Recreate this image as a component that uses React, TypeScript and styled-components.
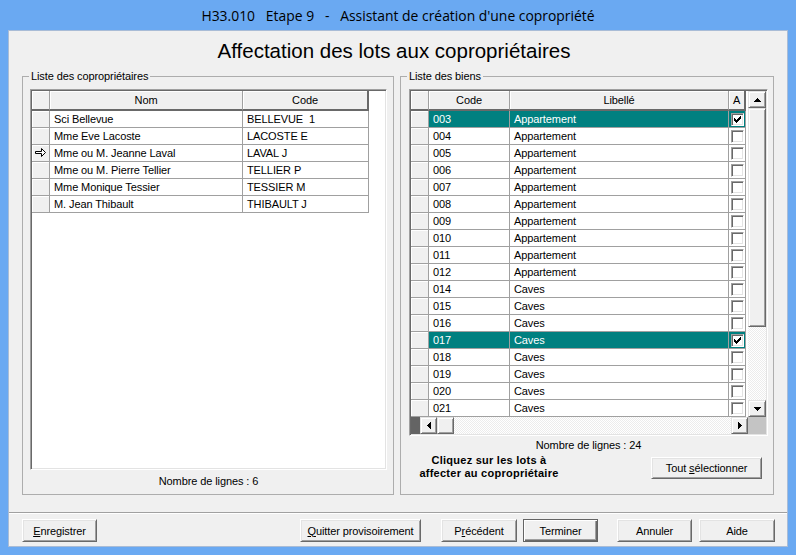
import React from "react";
import styled, { createGlobalStyle } from "styled-components";

const UI_FONT = `"Liberation Sans", Arial, sans-serif`;

const GlobalStyle = createGlobalStyle`
  html, body { margin: 0; padding: 0; background: #6aa9f2; }
  body { width: 796px; height: 555px; overflow: hidden; }
  *, *::before, *::after { box-sizing: border-box; }
`;

const Window = styled.div`
  width: 796px;
  height: 555px;
  padding: 0 8px 8px;
  background: #6aa9f2;
  display: flex;
  flex-direction: column;
  font-family: ${UI_FONT};
  font-size: 11px;
  letter-spacing: -0.1px;
  color: #000;
`;

const TitleBar = styled.div`
  height: 30px;
  flex: none;
  display: flex;
  align-items: center;
  justify-content: center;
  font-family: "Open Sans", "Noto Sans", sans-serif;
  font-size: 13.9px;
  letter-spacing: 0;
  white-space: pre;
  color: #000;
  padding-top: 1px;
`;

const Client = styled.div`
  flex: 1;
  background: #f0f0f0;
  border: 1px solid #a9bcd6;
  display: flex;
  flex-direction: column;
`;

const Heading = styled.h1`
  margin: 0;
  height: 39px;
  flex: none;
  font-family: ${UI_FONT};
  font-weight: normal;
  font-size: 20.5px;
  line-height: 39px;
  letter-spacing: 0;
  text-align: center;
  padding-right: 8px;
`;

const Panels = styled.div`
  display: flex;
  gap: 6px;
  padding: 0 13px;
  flex: none;
`;

const GroupBox = styled.fieldset<{ $w: number; $pl: number; $pr: number }>`
  margin: 0;
  min-width: 0;
  width: ${(p) => p.$w}px;
  padding: 6px ${(p) => p.$pr}px 0 ${(p) => p.$pl}px;
  border: 1px solid #adadad;
`;

const Legend = styled.legend<{ $ml: number }>`
  padding: 0 2px;
  margin-left: ${(p) => p.$ml}px;
  line-height: 13px;
  font-size: 11px;
`;

const GroupBody = styled.div`
  height: 405px;
  display: flex;
  flex-direction: column;
`;

const GridFrame = styled.div<{ $h: number }>`
  flex: none;
  height: ${(p) => p.$h}px;
  background: #fff;
  border: 1px solid;
  border-color: #a0a0a0 #ffffff #ffffff #a0a0a0;
  padding: 1px;
  box-shadow: inset 1px 1px 0 #696969, inset -1px -1px 0 #e3e3e3;
  display: flex;
  flex-direction: column;
  overflow: hidden;
`;

const GridTop = styled.div`
  flex: 1;
  display: flex;
  min-height: 0;
`;

const TableArea = styled.div`
  flex: 1;
  display: flex;
  flex-direction: column;
`;

const Row = styled.div`
  display: flex;
  flex: none;
`;

const HeaderCell = styled.div<{ $w: number; $last?: boolean }>`
  flex: none;
  width: ${(p) => p.$w}px;
  height: 20px;
  background: #f0f0f0;
  border-right: ${(p) => (p.$last ? "2px solid #696969" : "1px solid #a0a0a0")};
  border-bottom: 2px solid #696969;
  box-shadow: inset 1px 1px 0 #ffffff;
  text-align: center;
  line-height: 18px;
`;

const Indicator = styled.div<{ $w: number }>`
  flex: none;
  width: ${(p) => p.$w}px;
  height: 17px;
  background: #f0f0f0;
  border-right: 1px solid #a0a0a0;
  border-bottom: 1px solid #a0a0a0;
  box-shadow: inset 1px 1px 0 #ffffff;
  display: flex;
  align-items: center;
  justify-content: center;
`;

const Cell = styled.div<{ $w: number; $sel?: boolean }>`
  flex: none;
  width: ${(p) => p.$w}px;
  height: 17px;
  padding-left: 4px;
  border-right: 1px solid #a0a0a0;
  border-bottom: 1px solid #a0a0a0;
  background: ${(p) => (p.$sel ? "#008080" : "#ffffff")};
  color: ${(p) => (p.$sel ? "#ffffff" : "#000000")};
  line-height: 16px;
  white-space: pre;
  overflow: hidden;
`;

const CheckCell = styled(Cell)`
  padding: 0;
  display: flex;
  align-items: center;
  justify-content: center;
`;

const CheckBox = styled.div`
  width: 13px;
  height: 13px;
  background: #fff;
  border: 1px solid;
  border-color: #a0a0a0 #ffffff #ffffff #a0a0a0;
  box-shadow: inset 1px 1px 0 #696969, inset -1px -1px 0 #e3e3e3;
  display: flex;
  align-items: center;
  justify-content: center;
`;

const Raised = styled.div<{ $w?: number; $h?: number }>`
  flex: none;
  width: ${(p) => (p.$w ? `${p.$w}px` : "auto")};
  height: ${(p) => (p.$h ? `${p.$h}px` : "auto")};
  background: #f0f0f0;
  border: 1px solid;
  border-color: #e3e3e3 #696969 #696969 #e3e3e3;
  box-shadow: inset 1px 1px 0 #ffffff, inset -1px -1px 0 #a0a0a0;
  display: flex;
  align-items: center;
  justify-content: center;
`;

const Track = styled.div`
  flex: 1;
  background-color: #fff;
  background-image: repeating-conic-gradient(#ececec 0% 25%, #ffffff 0% 50%);
  background-size: 2px 2px;
`;

const VScroll = styled.div`
  flex: none;
  width: 18px;
  display: flex;
  flex-direction: column;
`;

const HScroll = styled.div`
  flex: none;
  height: 17px;
  display: flex;
`;

const SplitBox = styled.div`
  flex: none;
  width: 9px;
  background: #646464;
`;

const Corner = styled.div`
  flex: none;
  width: 18px;
  background: #c4c4c4;
`;

const CountLabel = styled.div<{ $h: number; $pb?: number }>`
  flex: none;
  height: ${(p) => p.$h}px;
  padding-bottom: ${(p) => p.$pb ?? 0}px;
  display: flex;
  align-items: center;
  justify-content: center;
`;

const BottomRow = styled.div`
  flex: 1;
  display: flex;
  align-items: flex-start;
`;

const Hint = styled.div`
  width: 160px;
  text-align: center;
  font-weight: bold;
  line-height: 13px;
  letter-spacing: 0.25px;
  padding-top: 1px;
`;

const Button = styled.button<{ $w: number; $h?: number; $default?: boolean }>`
  flex: none;
  width: ${(p) => p.$w}px;
  height: ${(p) => p.$h ?? 23}px;
  padding: 0;
  margin: 0;
  font-family: ${UI_FONT};
  font-size: 11px;
  letter-spacing: -0.1px;
  color: #000;
  background: #f0f0f0;
  border: 1px solid;
  border-color: ${(p) =>
    p.$default ? "#646464" : "#ffffff #696969 #696969 #ffffff"};
  box-shadow: ${(p) =>
    p.$default
      ? "inset 1px 1px 0 #ffffff, inset -1px -1px 0 #696969, inset -2px -2px 0 #a0a0a0"
      : "inset 1px 1px 0 #e3e3e3, inset -1px -1px 0 #a0a0a0"};
  text-align: center;
  cursor: default;
`;

const Separator = styled.div`
  flex: none;
  height: 2px;
  margin-top: 17px;
  border-top: 1px solid #a0a0a0;
  border-bottom: 1px solid #ffffff;
`;

const ButtonBar = styled.div`
  flex: none;
  display: flex;
  margin-top: 5px;
  padding: 0 12px 0 13px;
`;

const Spacer = styled.div<{ $w?: number }>`
  flex: ${(p) => (p.$w ? "none" : "1")};
  width: ${(p) => (p.$w ? `${p.$w}px` : "auto")};
`;

const TriUp = () => (
  <svg width="7" height="4" viewBox="0 0 7 4" shapeRendering="crispEdges">
    <path d="M3 0h1v1h-1zM2 1h3v1h-3zM1 2h5v1h-5zM0 3h7v1h-7z" fill="#000" />
  </svg>
);
const TriDown = () => (
  <svg width="7" height="4" viewBox="0 0 7 4" shapeRendering="crispEdges">
    <path d="M0 0h7v1h-7zM1 1h5v1h-5zM2 2h3v1h-3zM3 3h1v1h-1z" fill="#000" />
  </svg>
);
const TriLeft = () => (
  <svg width="4" height="7" viewBox="0 0 4 7" shapeRendering="crispEdges">
    <path d="M3 0h1v7h-1zM2 1h1v5h-1zM1 2h1v3h-1zM0 3h1v1h-1z" fill="#000" />
  </svg>
);
const TriRight = () => (
  <svg width="4" height="7" viewBox="0 0 4 7" shapeRendering="crispEdges">
    <path d="M0 0h1v7h-1zM1 1h1v5h-1zM2 2h1v3h-1zM3 3h1v1h-1z" fill="#000" />
  </svg>
);
const Check = () => (
  <svg width="7" height="7" viewBox="0 0 7 7" shapeRendering="crispEdges">
    <path
      d="M6 0h1v1h-1zM5 1h2v1h-2zM0 2h1v1h-1zM4 2h3v1h-3zM0 3h2v1h-2zM3 3h3v1h-3zM0 4h5v1h-5zM1 5h3v1h-3zM2 6h1v1h-1z"
      fill="#000"
    />
  </svg>
);
const RowArrow = () => (
  <svg width="12" height="10" viewBox="0 0 12 10">
    <path
      d="M0.5 3.5H6.5V0.5L10.5 4.5L6.5 8.5V5.5H0.5Z"
      fill="#fff"
      stroke="#000"
      strokeWidth="1"
      strokeLinejoin="miter"
    />
  </svg>
);

const owners = [
  { nom: "Sci Bellevue", code: "BELLEVUE  1" },
  { nom: "Mme Eve Lacoste", code: "LACOSTE E" },
  { nom: "Mme ou M. Jeanne Laval", code: "LAVAL J", current: true },
  { nom: "Mme ou M. Pierre Tellier", code: "TELLIER P" },
  { nom: "Mme Monique Tessier", code: "TESSIER M" },
  { nom: "M. Jean Thibault", code: "THIBAULT J" },
];

const lotCodes = [
  "003", "004", "005", "006", "007", "008", "009", "010", "011", "012",
  "014", "015", "016", "017", "018", "019", "020", "021",
];
const biens = lotCodes.map((code) => {
  const n = parseInt(code, 10);
  const checked = code === "003" || code === "017";
  return { code, libelle: n <= 12 ? "Appartement" : "Caves", checked };
});

export default function App() {
  return (
    <Window>
      <GlobalStyle />
      <TitleBar>{"H33.010   Etape 9   -   Assistant de création d'une copropriété"}</TitleBar>
      <Client>
        <Heading>Affectation des lots aux copropriétaires</Heading>
        <Panels>
          <GroupBox $w={372} $pl={7} $pr={6}>
            <Legend $ml={-1}>Liste des copropriétaires</Legend>
            <GroupBody>
              <GridFrame $h={381}>
                <Row>
                  <HeaderCell $w={18} />
                  <HeaderCell $w={193}>Nom</HeaderCell>
                  <HeaderCell $w={126} $last>
                    Code
                  </HeaderCell>
                </Row>
                {owners.map((o) => (
                  <Row key={o.code}>
                    <Indicator $w={18}>{o.current ? <RowArrow /> : null}</Indicator>
                    <Cell $w={193}>{o.nom}</Cell>
                    <Cell $w={126}>{o.code}</Cell>
                  </Row>
                ))}
              </GridFrame>
              <CountLabel $h={24} $pb={2}>
                Nombre de lignes : 6
              </CountLabel>
            </GroupBody>
          </GroupBox>

          <GroupBox $w={374} $pl={8} $pr={5}>
            <Legend $ml={-2}>Liste des biens</Legend>
            <GroupBody>
              <GridFrame $h={347}>
                <GridTop>
                  <TableArea>
                    <Row>
                      <HeaderCell $w={18} />
                      <HeaderCell $w={81}>Code</HeaderCell>
                      <HeaderCell $w={219}>Libellé</HeaderCell>
                      <HeaderCell $w={17} $last>
                        A
                      </HeaderCell>
                    </Row>
                    {biens.map((b) => (
                      <Row key={b.code}>
                        <Indicator $w={18} />
                        <Cell $w={81} $sel={b.checked}>
                          {b.code}
                        </Cell>
                        <Cell $w={219} $sel={b.checked}>
                          {b.libelle}
                        </Cell>
                        <CheckCell $w={17} $sel={b.checked}>
                          <CheckBox>{b.checked ? <Check /> : null}</CheckBox>
                        </CheckCell>
                      </Row>
                    ))}
                  </TableArea>
                  <VScroll>
                    <Raised $h={17}>
                      <TriUp />
                    </Raised>
                    <Raised $h={219} />
                    <Track />
                    <Raised $h={17}>
                      <TriDown />
                    </Raised>
                  </VScroll>
                </GridTop>
                <HScroll>
                  <SplitBox />
                  <Raised $w={17}>
                    <TriLeft />
                  </Raised>
                  <Raised $w={17} />
                  <Track />
                  <Raised $w={17}>
                    <TriRight />
                  </Raised>
                  <Corner />
                </HScroll>
              </GridFrame>
              <CountLabel $h={17}>Nombre de lignes : 24</CountLabel>
              <BottomRow>
                <Hint>
                  Cliquez sur les lots à
                  <br />
                  affecter au copropriétaire
                </Hint>
                <Spacer />
                <Button $w={111} $h={22} style={{ marginTop: 4, marginRight: 6 }}>
                  Tout <u>s</u>électionner
                </Button>
              </BottomRow>
            </GroupBody>
          </GroupBox>
        </Panels>
        <Separator />
        <ButtonBar>
          <Button $w={75}>
            <u>E</u>nregistrer
          </Button>
          <Spacer />
          <Button $w={121}>
            <u>Q</u>uitter provisoirement
          </Button>
          <Spacer $w={20} />
          <Button $w={76}>
            P<u>r</u>écédent
          </Button>
          <Spacer $w={6} />
          <Button $w={75} $default>
            Terminer
          </Button>
          <Spacer $w={19} />
          <Button $w={75}>Annuler</Button>
          <Spacer $w={7} />
          <Button $w={76}>Aide</Button>
        </ButtonBar>
      </Client>
    </Window>
  );
}
